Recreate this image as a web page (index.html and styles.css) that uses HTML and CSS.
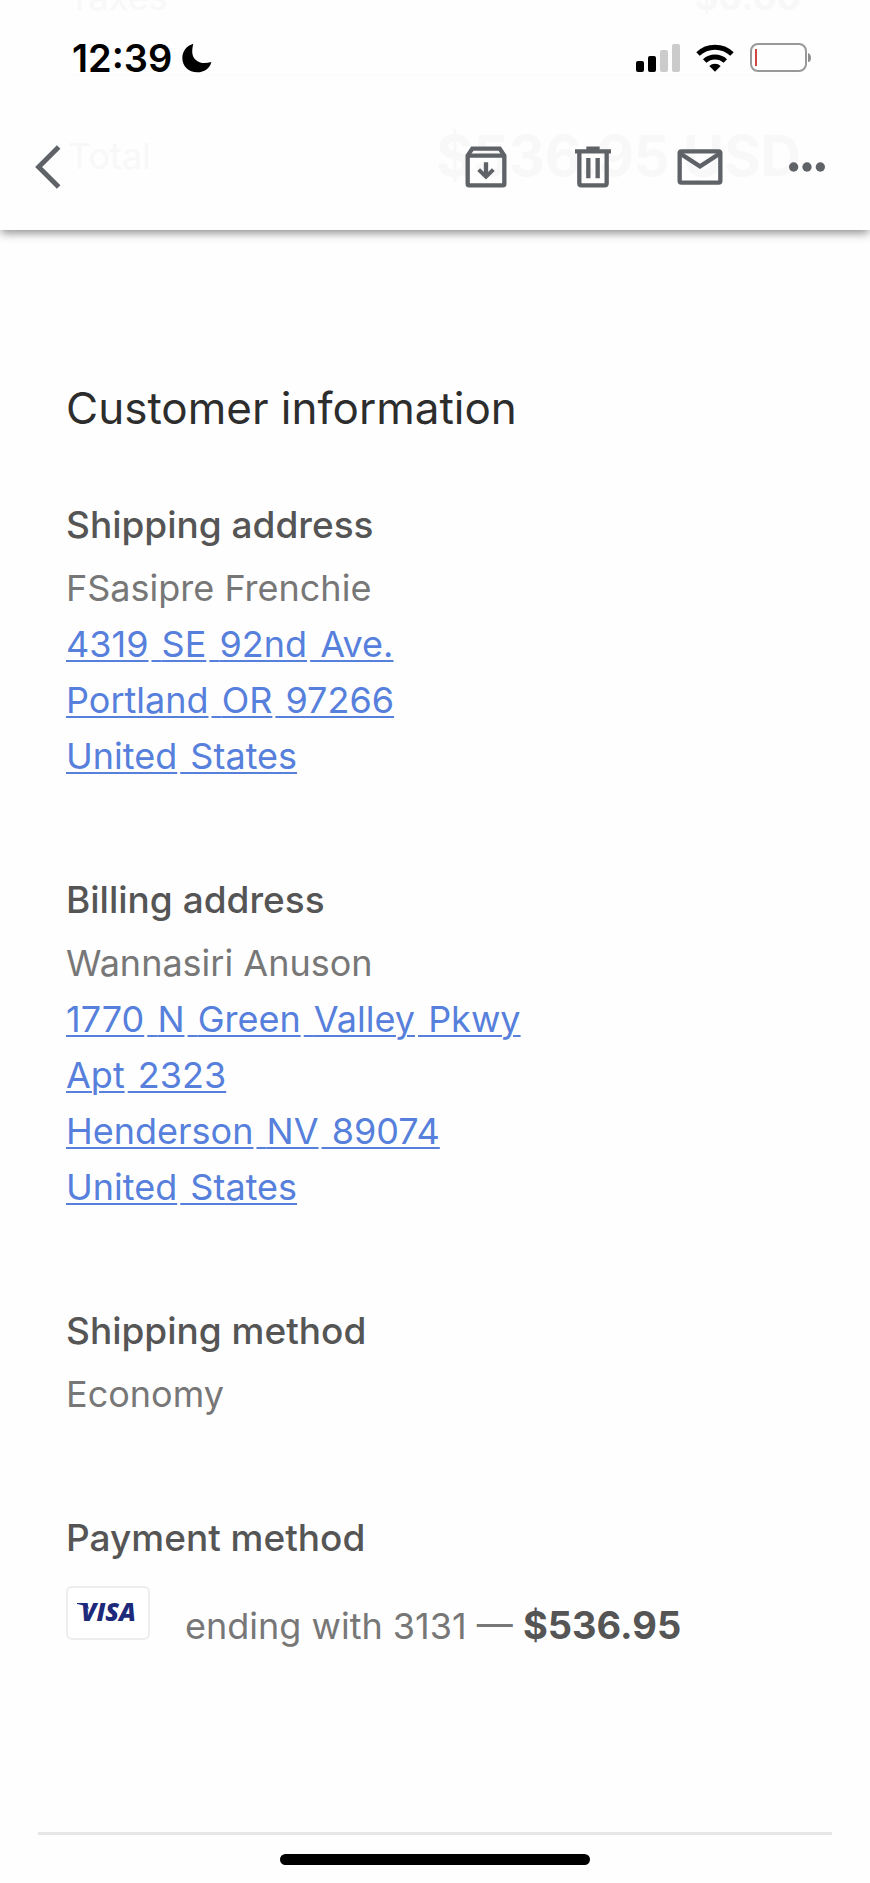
FILE: index.html
```html
<!DOCTYPE html>
<html lang="en">
<head>
<meta charset="utf-8">
<meta name="viewport" content="width=device-width, initial-scale=1">
<title>Order confirmation</title>
<link rel="stylesheet" href="styles.css">
</head>
<body>
<div class="screen">
  <header class="topbar">
    <div class="underlay">
      <div class="underlay-row underlay-taxes"><span>Taxes</span><b>$0.00</b></div>
      <div class="underlay-row underlay-total"><span>Total</span><b class="underlay-sum">$536.95 USD</b></div>
    </div>
    <div class="status">
      <div class="clock">
        <span>12:39</span>
        <svg class="moon" viewBox="0 0 90 90" aria-hidden="true"><path d="M34 2C28 26 30 40 41 50c11 11 27 13 47 7C84 76 67 88 46 88 20 88 1 70 1 45 1 24 14 8 34 2z"/></svg>
      </div>
      <div class="signals">
        <svg class="bars" viewBox="0 0 44 28" aria-hidden="true"><rect y="17" width="8" height="11" rx="2"/><rect x="12" y="12" width="8" height="16" rx="2"/><g fill="#cbcbcb"><rect x="24" y="6" width="8" height="22" rx="2"/><rect x="36" width="8" height="28" rx="2"/></g></svg>
        <svg class="wifi" viewBox="0 0 114 84" aria-hidden="true"><g fill="none" stroke="#000" stroke-width="15"><path d="M6 30a74 74 0 0 1 102 0"/><path d="M26 51a46 46 0 0 1 62 0"/></g><path d="M57 83 40 66a24 24 0 0 1 34 0z"/></svg>
        <svg class="battery" viewBox="0 0 62 30" aria-hidden="true"><rect x="1" y="1" width="55" height="27" rx="7" fill="none" stroke="#999" stroke-width="2"/><rect x="5" y="6" width="2" height="17" fill="#cf4540"/><path d="M58 10q3 1 3 5t-3 4z" fill="#8e8e8e"/></svg>
      </div>
    </div>
    <nav class="toolbar" aria-label="Message">
      <button class="tool" type="button" aria-label="Back"><svg viewBox="0 0 180 180"><path d="m122 30-60 60 60 60" stroke-width="15"/></svg></button>
      <div class="tools">
        <button class="tool" type="button" aria-label="Archive"><svg viewBox="0 0 180 180"><path d="M35 56v84q0 5 5 5h100q5 0 5-5V56l-14-21H49z" stroke-width="13"/><path d="M35 56h110M90 76v40" stroke-width="13"/><path d="m68 98 22 21 22-21" stroke-width="12"/></svg></button>
        <button class="tool" type="button" aria-label="Delete"><svg viewBox="0 0 180 180"><path d="M49 46v93q0 6 6 6h70q6 0 6-6V46M36 43h108M70 35h40M76 63v61M104 63v61" stroke-width="13"/></svg></button>
        <button class="tool" type="button" aria-label="Mark as unread"><svg viewBox="0 0 180 180"><rect x="29" y="43" width="122" height="94" rx="5" stroke-width="13"/><path d="m31 50 59 38 59-38" stroke-width="13"/></svg></button>
        <button class="tool" type="button" aria-label="More"><svg viewBox="0 0 180 180"><g fill="#5f6267" stroke="none"><circle cx="50" cy="90" r="14"/><circle cx="90" cy="90" r="14"/><circle cx="130" cy="90" r="14"/></g></svg></button>
      </div>
    </nav>
  </header>

  <main class="content">
    <h1 class="title">Customer information</h1>
    <section class="block">
      <h2 class="label">Shipping address</h2>
      <p class="lines">FSasipre Frenchie<br>
        <a href="#shipping-map"><span class="word">4319</span> <span class="word">SE</span> <span class="word">92nd</span> Ave.<br><span class="word">Portland</span> <span class="word">OR</span> 97266<br><span class="word">United</span> States</a></p>
    </section>
    <section class="block">
      <h2 class="label">Billing address</h2>
      <p class="lines">Wannasiri Anuson<br>
        <a href="#billing-map"><span class="word">1770</span> <span class="word">N</span> <span class="word">Green</span> <span class="word">Valley</span> Pkwy<br><span class="word">Apt</span> 2323<br><span class="word">Henderson</span> <span class="word">NV</span> 89074<br><span class="word">United</span> States</a></p>
    </section>
    <section class="block">
      <h2 class="label">Shipping method</h2>
      <p class="lines">Economy</p>
    </section>
    <section class="block">
      <h2 class="label">Payment method</h2>
      <div class="payment">
        <svg class="card" viewBox="0 0 84 54" role="img" aria-label="Visa"><rect x="1" y="1" width="82" height="52" rx="5" fill="#fff" stroke="#ededed" stroke-width="2"/><path class="visa-ink" d="M11 17h10l2 6q-4-4-12-5z"/><text class="visa-text visa-ink" x="15" y="35">VISA</text></svg>
        <p class="lines">ending with 3131 — <strong>$536.95</strong></p>
      </div>
    </section>
  </main>

  <footer class="bottom">
    <hr class="rule">
    <div class="home"></div>
  </footer>
</div>
</body>
</html>
```
FILE: styles.css
```css
* { box-sizing: border-box; }

body {
  margin: 0;
  background: #fefefe;
  color: #777;
  font-family: Inter, "Liberation Sans", sans-serif;
  font-size: 36px;
  line-height: 56px;
}

.screen {
  display: flex;
  flex-direction: column;
  min-height: 100vh;
}

.topbar {
  position: relative;
  padding-bottom: 12px;
  background: #fefefe;
  box-shadow: 0 4px 9px -1px rgba(0, 0, 0, 0.45);
}

.underlay {
  position: absolute;
  inset: 0;
  padding: 0 69px 0 68px;
  overflow: hidden;
  color: #f8f8f8;
}
.underlay-row {
  display: flex;
  justify-content: space-between;
  align-items: center;
}
.underlay-taxes {
  height: 116px;
  margin-top: -40px;
  padding-bottom: 40px;
  border-bottom: 2px solid #fcfcfc;
}
.underlay-total { height: 160px; }
.underlay-sum { font-size: 56px; }

.status {
  position: relative;
  display: flex;
  justify-content: space-between;
  align-items: center;
  height: 116px;
  padding: 0 58px 0 72px;
  color: #000;
}
.clock {
  display: flex;
  align-items: center;
  gap: 10px;
  font-size: 38px;
  font-weight: 600;
}
.moon { width: 30px; height: 30px; }
.signals {
  display: flex;
  align-items: center;
  gap: 16px;
}
.bars { width: 44px; height: 28px; }
.wifi { width: 38px; height: 28px; }
.battery { width: 62px; height: 30px; }

.toolbar {
  position: relative;
  display: flex;
  justify-content: space-between;
  align-items: center;
  height: 102px;
  padding: 0 33px 0 18px;
}
.tools { display: flex; gap: 47px; }
.tool {
  width: 60px;
  height: 60px;
  padding: 0;
  border: 0;
  background: none;
}
.tool svg {
  display: block;
  width: 60px;
  height: 60px;
  fill: none;
  stroke: #5f6267;
}

.content { padding: 150px 66px 0; }
.title {
  margin: 0 0 61px;
  color: #2d2d2d;
  font-size: 44px;
  font-weight: 400;
}
.block + .block { margin-top: 88px; }
.label {
  margin: 0 0 7px;
  color: #555;
  font-size: 37px;
  font-weight: 500;
}
.lines { margin: 0; }
.lines a {
  color: #5680db;
  text-decoration-line: underline;
  text-decoration-thickness: 2px;
  text-underline-offset: 3px;
}
.word { margin-right: 3px; }
.lines strong {
  color: #555;
  font-size: 38px;
  font-weight: 700;
}

.payment {
  display: flex;
  align-items: flex-end;
  gap: 35px;
  padding-top: 13px;
}
.card {
  flex: none;
  width: 84px;
  height: 54px;
  margin-bottom: 14px;
}
.visa-ink { fill: #1d2a7c; }
.visa-text {
  font-family: "Open Sans", "Noto Sans", sans-serif;
  font-size: 25px;
  font-style: italic;
  font-weight: 800;
}

.bottom {
  margin-top: auto;
  padding: 0 38px 18px;
}
.rule {
  height: 3px;
  margin: 0 0 19px;
  border: 0;
  background: #e6e6e6;
}
.home {
  width: 39%;
  height: 11px;
  margin: 0 auto;
  border-radius: 6px;
  background: #000;
}
```
